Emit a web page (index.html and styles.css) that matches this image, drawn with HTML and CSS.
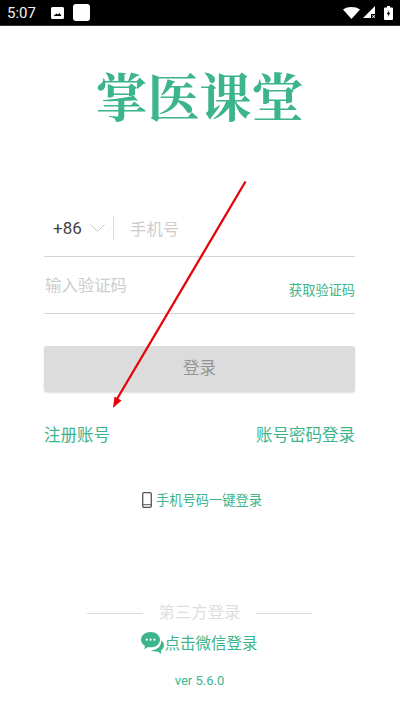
FILE: index.html
```html
<!DOCTYPE html>
<html lang="zh-CN">
<head>
<meta charset="utf-8">
<title>掌医课堂</title>
<link rel="stylesheet" href="styles.css">
</head>
<body>
<div class="page">
  <header class="status">
    <span class="time">5:07</span>
    <svg class="st-img" viewBox="0 0 13 12"><path fill="#fff" fill-rule="evenodd" d="M1.500 0h10A1.500 1.500 0 0 1 13 1.500v9a1.500 1.500 0 0 1-1.500 1.500h-10A1.500 1.500 0 0 1 0 10.500v-9A1.500 1.500 0 0 1 1.500 0zM2.500 9h8L8.500 6 7 7.500 5.500 6.500z"/></svg>
    <span class="st-square"></span>
    <span class="st-spacer"></span>
    <svg class="st-wifi" viewBox="0 0 17 12"><path fill="#fff" d="M0 2.500C4.500-.8 12.500-.8 17 2.500L8.500 12z"/></svg>
    <svg class="st-signal" viewBox="0 0 13 13"><path fill="#fff" d="M12 0v8H8v4H0z"/><path fill="#fff" d="M9 9.500l.6-.6 1 1 1-1 .6.600-1 1 1 1-.6.600-1-1-1 1-.6-.600 1-1z"/></svg>
    <svg class="st-batt" viewBox="0 0 9 14"><path fill="#fff" fill-rule="evenodd" d="M3 0h3v1.500h2a1 1 0 0 1 1 1V13a1 1 0 0 1-1 1H1a1 1 0 0 1-1-1V2.500a1 1 0 0 1 1-1h2zM5 4 2.800 8.200h1.500L3.800 11 6.300 6.800H4.700z"/></svg>
  </header>

  <main class="content">
    <h1 class="logo">掌医课堂</h1>

    <div class="field phone">
      <span class="code">+86</span>
      <svg class="chev" viewBox="0 0 15 8"><path d="M.5.500 7.500 7.500 14.500.500" fill="none" stroke="#c9c9c9" stroke-width="1"/></svg>
      <span class="sep"></span>
      <span class="ph">手机号</span>
    </div>

    <div class="field sms">
      <span class="ph">输入验证码</span>
      <span class="get">获取验证码</span>
    </div>

    <div class="btn"><span class="btn-label">登录</span></div>

    <div class="links">
      <span>注册账号</span>
      <span>账号密码登录</span>
    </div>

    <div class="oneclick">
      <svg class="phone-ico" viewBox="0 0 10 16"><rect x=".7" y=".7" width="8.600" height="14.600" rx="1.200" fill="none" stroke="#555" stroke-width="1.300"/><path d="M1 12.700h8" stroke="#555" stroke-width="1"/></svg>
      <span>手机号码一键登录</span>
    </div>

    <div class="bottom">
      <div class="third"><i></i><span class="third-label">第三方登录</span><i></i></div>
      <div class="wechat">
        <svg class="we-ico" viewBox="0 0 24 24"><path fill="#3cb48c" d="M10 0c5.500 0 9.800 3.500 9.800 8s-4.300 8-9.800 8c-1 0-1.800-.1-2.700-.3L3.500 18l.6-3.700C1.600 12.900 0 10.600 0 8 0 3.500 4.500 0 10 0z"/><path fill="#3cb48c" d="M21 8.500c1.900 1.500 3 3.300 3 5.300 0 2.200-1.300 4.100-3.300 5.400l.5 3.800-3.700-2.600c-2.500.3-5-.3-7-1.600 5.800.3 11.300-3.900 10.500-10.300z"/><circle cx="6" cy="8" r="1.100" fill="#fff"/><circle cx="10" cy="8" r="1.100" fill="#fff"/><circle cx="14" cy="8" r="1.100" fill="#fff"/></svg>
        <span>点击微信登录</span>
      </div>
      <div class="ver">ver 5.6.0</div>
    </div>
  </main>

  <svg class="arrow" viewBox="0 0 400 711"><path d="M245.500 181.500 117 399" stroke="#e6040a" stroke-width="2.300" fill="none"/><path d="M113 408l1.500-11.500 7 4z" fill="#e6040a"/></svg>
</div>
</body>
</html>
```
FILE: styles.css
```css
* { box-sizing: border-box; }
html, body { margin: 0; padding: 0; }
body {
  background: #fff;
  font-family: "Noto Sans CJK SC", "Noto Sans", sans-serif;
}
.page {
  position: relative;
  width: 400px;
  height: 711px;
  overflow: hidden;
  display: flex;
  flex-direction: column;
}
.status {
  flex: none;
  height: 26px;
  background: #000;
  border-bottom: 1px solid #333;
  display: flex;
  align-items: center;
  padding: 0 6px 0 7px;
}
.time {
  font-family: Roboto, sans-serif;
  font-size: 15px;
  color: #f2f2f2;
  width: 44px;
}
.st-img { width: 13px; height: 12px; margin-right: 9px; }
.st-square { width: 17px; height: 17px; background: #fff; border-radius: 3px; }
.st-spacer { flex: 1; }
.st-wifi { width: 17px; height: 12px; margin-right: 3px; }
.st-signal { width: 13px; height: 13px; margin-right: 8px; }
.st-batt { width: 9px; height: 14px; margin-right: 1px; }
.content {
  flex: 1;
  display: flex;
  flex-direction: column;
  padding: 0 45px 0 44px;
}
.logo {
  margin: 35px 0 0;
  height: 68px;
  text-align: center;
  font-family: "Noto Serif CJK SC", "Noto Sans CJK SC", serif;
  font-size: 52px;
  line-height: 68px;
  font-weight: 700;
  color: #3cb48c;
}
.field {
  display: flex;
  border-bottom: 1px solid #d4d4d4;
}
.phone {
  margin-top: 71px;
  height: 57px;
  align-items: center;
  padding: 0 0 0 9px;
}
.code { font-family: Roboto, sans-serif; font-size: 17px; color: #444; width: 37px; line-height: 24px; }
.chev { width: 15px; height: 8px; }
.sep { width: 1px; height: 24px; background: #dcdcdc; margin: 0 16px 0 8px; }
.ph { font-size: 16.400px; color: #cdcdcd; line-height: 24px; }
.sms {
  height: 57px;
  justify-content: space-between;
  padding: 15px 0 0 1px;
}
.get { font-size: 13.200px; color: #3cb48c; align-self: flex-end; line-height: 20px; margin-bottom: 13px; }
.btn {
  margin-top: 32px;
  height: 46px;
  background: #dcdcdc;
  border-radius: 3px;
  box-shadow: 0 1px 2px rgba(0,0,0,.12);
  display: flex;
  align-items: center;
  justify-content: center;
  font-size: 16.500px;
  color: #949494;
}
.btn-label { margin-bottom: 4px; }
.links {
  margin-top: 30px;
  display: flex;
  justify-content: space-between;
  font-size: 16.500px;
  line-height: 24px;
  color: #3cb48c;
}
.oneclick {
  margin-top: 44px;
  padding-left: 5px;
  display: flex;
  justify-content: center;
  align-items: center;
  gap: 4px;
  font-size: 13.250px;
  line-height: 20px;
  color: #3cb48c;
}
.phone-ico { width: 10px; height: 16px; }
.bottom {
  margin-top: auto;
  padding-bottom: 21px;
  display: flex;
  flex-direction: column;
  align-items: center;
}
.third {
  display: flex;
  align-items: center;
  gap: 16px;
  font-size: 16.400px;
  line-height: 24px;
  color: #dedede;
}
.third-label { margin-bottom: 5px; }
.third i { width: 56px; height: 1px; background: #dcdcdc; }
.wechat {
  margin-top: 2px;
  display: flex;
  align-items: center;
  font-size: 15.500px;
  line-height: 24px;
  color: #3cb48c;
}
.wechat span { margin-bottom: 3px; }
.we-ico { width: 23px; height: 23px; }
.ver {
  margin-top: 15px;
  font-family: Roboto, sans-serif;
  font-size: 13px;
  line-height: 18px;
  color: #3cb48c;
}
.arrow {
  position: absolute;
  left: 0;
  top: 0;
  width: 400px;
  height: 711px;
  pointer-events: none;
}
```
